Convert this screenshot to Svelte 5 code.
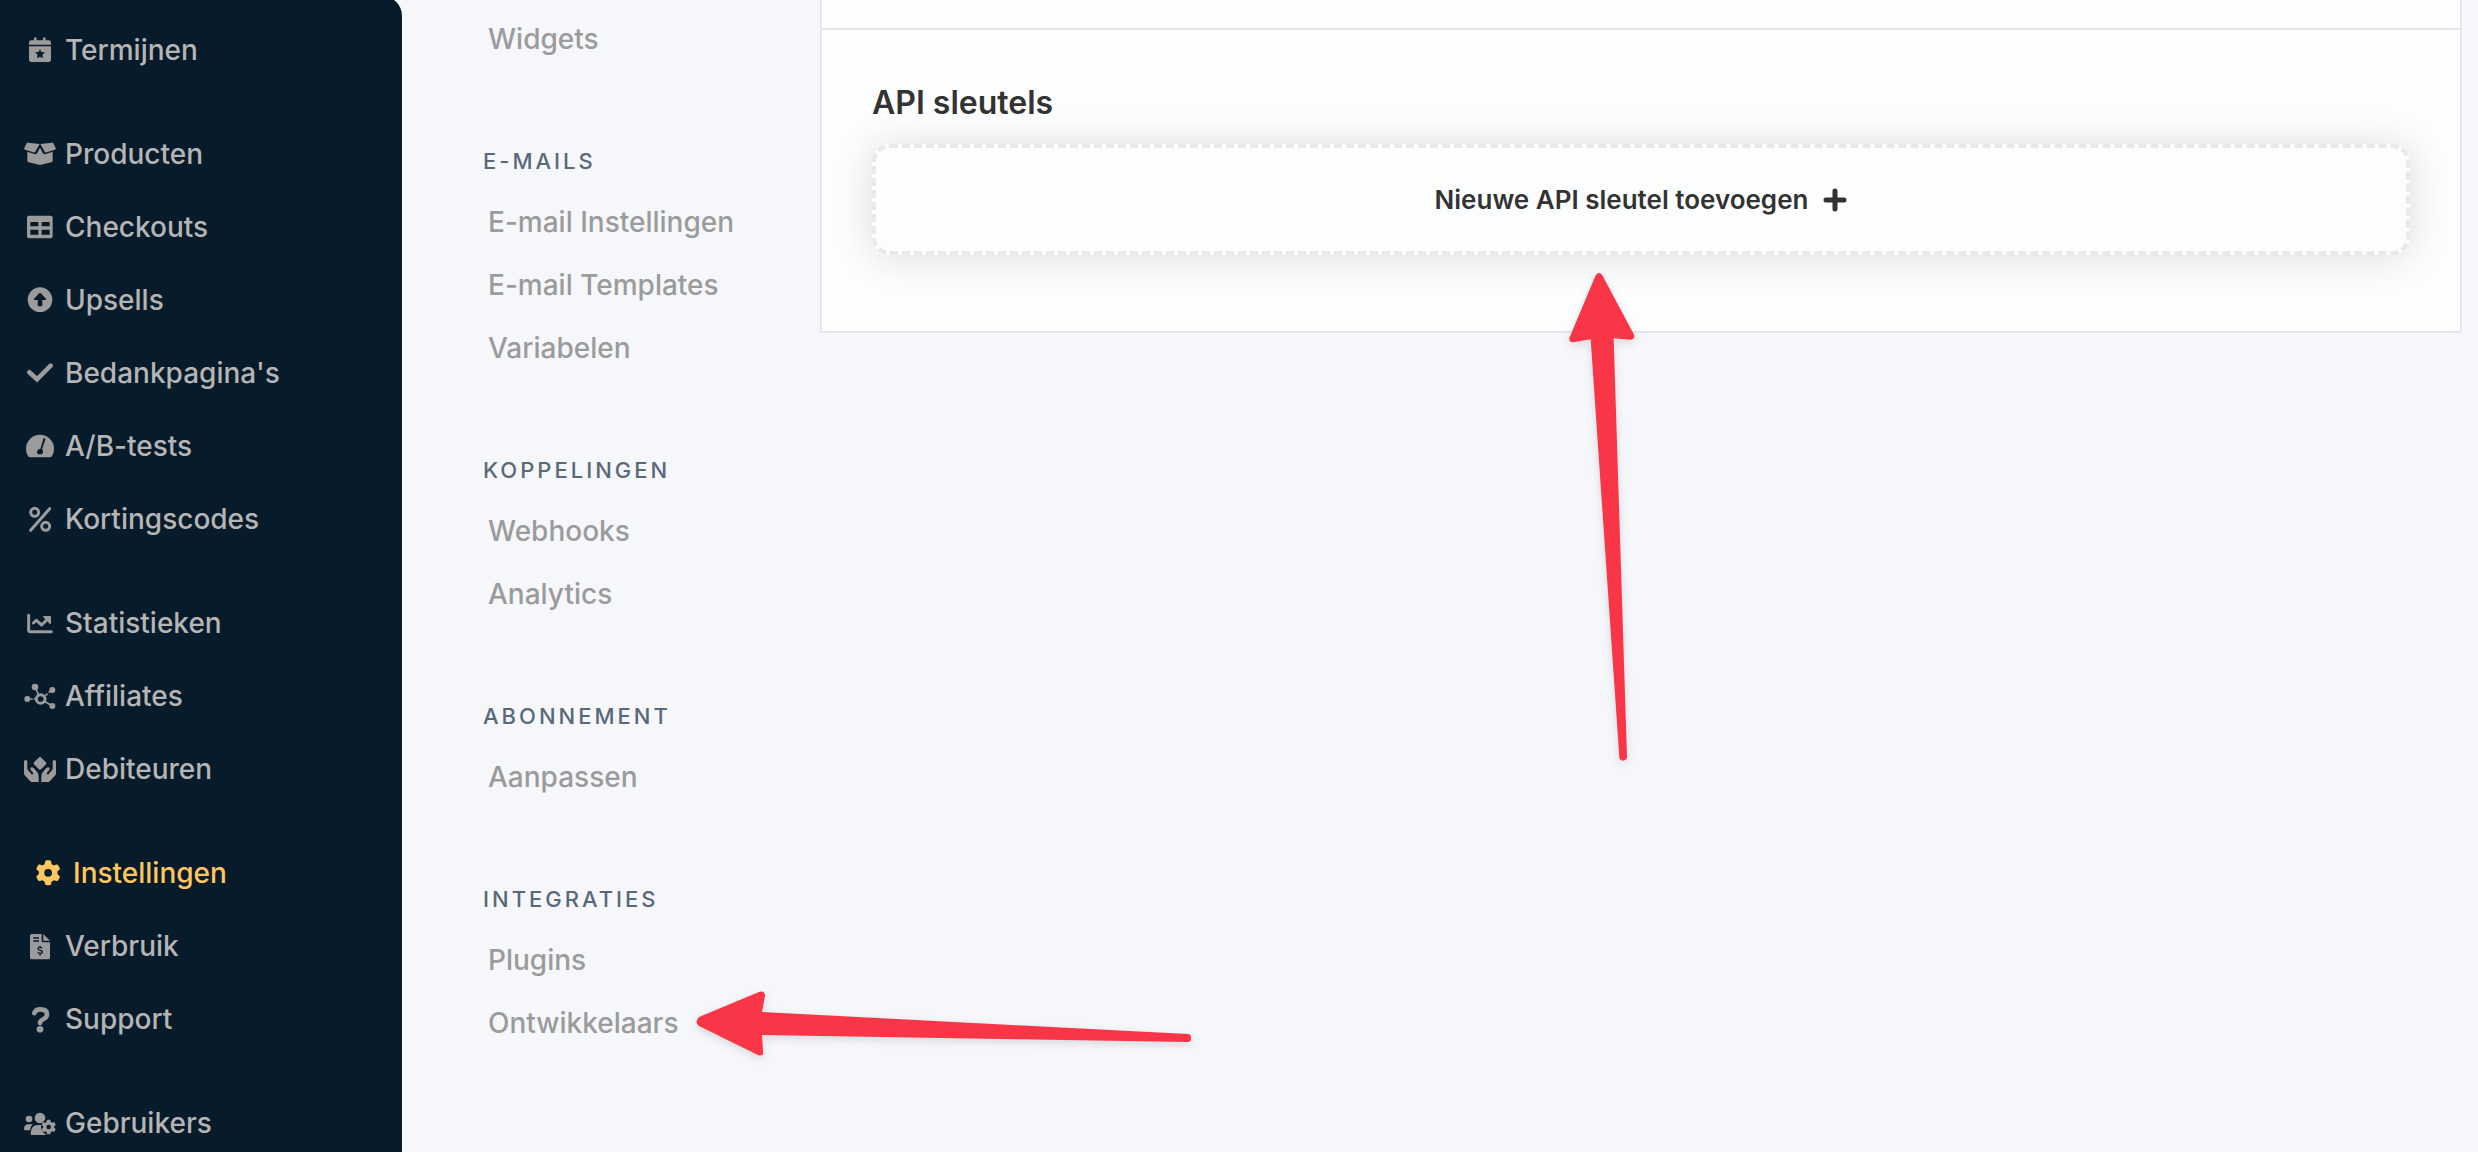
<script lang="ts">
  type MenuItem = { label: string; icon: string; active?: boolean };

  const gear =
    'M495.9 166.6c3.2 8.7 .5 18.4-6.4 24.6l-43.3 39.4c1.1 8.3 1.7 16.8 1.7 25.4s-.6 17.1-1.7 25.4l43.3 39.4c6.9 6.2 9.6 15.9 6.4 24.6c-4.4 11.9-9.7 23.3-15.8 34.3l-4.7 8.1c-6.6 11-14 21.4-22.1 31.2c-5.9 7.2-15.7 9.6-24.5 6.8l-55.7-17.7c-13.4 10.3-28.2 18.9-44 25.4l-12.5 57.1c-2 9.1-9 16.3-18.2 17.8c-13.8 2.3-28 3.5-42.5 3.5s-28.7-1.2-42.5-3.5c-9.2-1.5-16.2-8.7-18.2-17.8l-12.5-57.1c-15.8-6.5-30.6-15.1-44-25.4L83.1 425.9c-8.8 2.8-18.6 .3-24.5-6.8c-8.1-9.8-15.5-20.2-22.1-31.2l-4.7-8.1c-6.1-11-11.4-22.4-15.8-34.3c-3.2-8.7-.5-18.4 6.4-24.6l43.3-39.4C64.6 273.1 64 264.6 64 256s.6-17.1 1.7-25.4L22.4 191.2c-6.9-6.2-9.6-15.9-6.4-24.6c4.4-11.9 9.7-23.3 15.8-34.3l4.7-8.1c6.6-11 14-21.4 22.1-31.2c5.9-7.2 15.7-9.6 24.5-6.8l55.7 17.7c13.4-10.3 28.2-18.9 44-25.4l12.5-57.1c2-9.1 9-16.3 18.2-17.8C227.3 1.2 241.5 0 256 0s28.7 1.2 42.5 3.5c9.2 1.5 16.2 8.7 18.2 17.8l12.5 57.1c15.8 6.5 30.6 15.1 44 25.4l55.7-17.7c8.8-2.8 18.6-.3 24.5 6.8c8.1 9.8 15.5 20.2 22.1 31.2l4.7 8.1c6.1 11 11.4 22.4 15.8 34.3zM256 336a80 80 0 1 0 0-160 80 80 0 1 0 0 160z';

  const menuGroups: MenuItem[][] = [
    [{ label: 'Termijnen', icon: 'calendar' }],
    [
      { label: 'Producten', icon: 'box' },
      { label: 'Checkouts', icon: 'table' },
      { label: 'Upsells', icon: 'up' },
      { label: "Bedankpagina's", icon: 'check' },
      { label: 'A/B-tests', icon: 'gauge' },
      { label: 'Kortingscodes', icon: 'percent' }
    ],
    [
      { label: 'Statistieken', icon: 'chart' },
      { label: 'Affiliates', icon: 'nodes' },
      { label: 'Debiteuren', icon: 'hands' }
    ],
    [
      { label: 'Instellingen', icon: 'gear', active: true },
      { label: 'Verbruik', icon: 'invoice' },
      { label: 'Support', icon: 'question' }
    ],
    [{ label: 'Gebruikers', icon: 'users' }]
  ];

  const settings = [
    { title: '', items: ['Widgets'] },
    { title: 'E-mails', items: ['E-mail Instellingen', 'E-mail Templates', 'Variabelen'] },
    { title: 'Koppelingen', items: ['Webhooks', 'Analytics'] },
    { title: 'Abonnement', items: ['Aanpassen'] },
    { title: 'Integraties', items: ['Plugins', 'Ontwikkelaars'] }
  ];
</script>

{#snippet icon(name: string)}
  <svg class="icon" viewBox="0 0 96 78" aria-hidden="true">
    {#if name === 'calendar'}
      <path d="M15 23v-6q0-7 7-7h8V4q0-3 4-3t4 3v6h19V4q0-3 4-3t4 3v6h9q7 0 7 7v6z" />
      <path fill-rule="evenodd" d="M15 28h66v40q0 7-7 7H22q-7 0-7-7zM48 36l-4 9-11 1 8 7-2 11 9-5 9 5-2-11 8-7-11-1z" />
    {:else if name === 'box'}
      <path d="M8 7q1-3 4-2l35 4-13 23q-2 4-6 2L3 26q-4-2-2-5z" />
      <path d="M88 7q-1-3-4-2L49 9l13 23q2 4 6 2l25-8q4-2 2-5z" />
      <path d="M10 32l21 7q6 2 9-4l8-15 8 15q3 6 9 4l21-7v27q0 4-4 5l-34 8-34-8q-4-1-4-5z" />
    {:else if name === 'table'}
      <path fill-rule="evenodd" d="M15 5h65q6 0 6 6v56q0 6-6 6H15q-6 0-6-6V11q0-6 6-6zM19 24v13h24V24zM53 24v13h24V24zM19 47v15h24V47zM53 47v15h24V47z" />
    {:else if name === 'up'}
      <path fill-rule="evenodd" d="M48 1a37 37 0 1 0 0 74 37 37 0 1 0 0-74zM44 20q4-4 8 0l14 15q2 4-2 4h-9v15q0 4-4 4h-6q-4 0-4-4V39h-9q-4 0-2-4z" />
    {:else if name === 'check'}
      <path class="line thick" d="M16 37l23 21 41-41" />
    {:else if name === 'gauge'}
      <path fill-rule="evenodd" d="M48 5a42 42 0 0 1 42 43q0 12-6 21-2 4-7 4H19q-5 0-7-4-6-9-6-21A42 42 0 0 1 48 5zM58 18l-9 30q-10 1-10 9 0 4 3 7h12q4-4 3-9 0-3-3-6l10-29q0-5-3-5t-3 3z" />
    {:else if name === 'percent'}
      <circle class="line" cx="32" cy="19" r="12" />
      <circle class="line" cx="65" cy="61" r="12" />
      <path class="line" d="M77 8L20 73" />
    {:else if name === 'chart'}
      <path class="line" d="M14 16v45q0 4 4 4h64" />
      <path class="line" d="M28 39l9-8 16 14 18-18" />
      <path d="M59 18h19q3 0 3 3v19q-1 3-4 1L59 23q-3-4 0-5z" />
    {:else if name === 'nodes'}
      <path class="line thin" d="M33 12l12 26M60 54l25 15M19 48h7m3 0h8M64 38l7-6m3-3l7-6" />
      <circle cx="10" cy="48" r="9" />
      <circle cx="33" cy="12" r="10" />
      <circle cx="85" cy="21" r="9" />
      <circle cx="85" cy="69" r="9" />
      <circle class="line" cx="50" cy="48" r="13" />
    {:else if name === 'hands'}
      <path d="M44 5q4-4 8 0l13 13q4 4 0 8L52 39q-4 4-8 0L31 26q-4-4 0-8z" />
      <path d="M0 17q0-5 5-5t5 5v23l14 16q5-2 2-7l-6-7q-3-5 2-8 4-1 7 2l11 13q4 5 4 12v17H24q-4 0-6-3L2 58q-2-3-2-7z" />
      <path d="M96 17q0-5-5-5t-5 5v23L72 56q-5-2-2-7l6-7q3-5-2-8-4-1-7 2L56 49q-4 5-4 12v17h20q4 0 6-3l16-17q2-3 2-7z" />
    {:else if name === 'gear'}
      <path transform="translate(11 1) scale(.146)" d={gear} />
    {:else if name === 'invoice'}
      <path fill-rule="evenodd" d="M23 3h30v20q0 5 5 5h20v46q0 5-5 5H23q-5 0-5-5V8q0-5 5-5zM28 13v4h17v-4zM28 22v4h17v-4z" />
      <path d="M58 3l20 20H58z" />
      <path class="cut" d="M55 45q-13-5-13 2 0 4 7 5 7 2 6 6-1 6-14 1M48 38v5M48 61v7" />
    {:else if name === 'question'}
      <path class="line thick" d="M31 21q4-11 18-11 20 0 20 15 0 9-10 14-11 5-11 12" />
      <circle cx="48" cy="70" r="10" />
    {:else if name === 'users'}
      <circle cx="15" cy="27" r="10" />
      <circle cx="48" cy="24" r="16" />
      <path d="M0 58q0-15 14-15h12q-7 7-8 18H4q-4 0-4-3z" />
      <path d="M20 72q0-27 22-27h14l10 30H24q-4 0-4-3z" />
      <circle class="gap" cx="74" cy="51" r="23" />
      <path transform="translate(52 29) scale(.086)" d={gear} />
    {/if}
  </svg>
{/snippet}

<div class="page">
  <nav class="sidebar" aria-label="Hoofdmenu">
    {#each menuGroups as group}
      <ul>
        {#each group as item}
          <li>
            <a href="#{item.icon}" class:active={item.active}>
              {@render icon(item.icon)}
              <span>{item.label}</span>
            </a>
          </li>
        {/each}
      </ul>
    {/each}
  </nav>

  <nav class="settings" aria-label="Instellingen">
    {#each settings as section}
      <section>
        {#if section.title}
          <h2>{section.title}</h2>
        {/if}
        <ul>
          {#each section.items as item}
            <li>
              <a href="#{item}">{item}</a>
              {#if item === 'Ontwikkelaars'}
                <svg class="arrow arrow-left" viewBox="0 0 510 80" aria-hidden="true">
                  <path d="M9 32Q4 37 9 41L68 70Q74 72 73 66L72 50 498 57Q501 57 501 53 501 49 498 49L72 27 75 11Q75 5 69 7Z" />
                </svg>
              {/if}
            </li>
          {/each}
        </ul>
      </section>
    {/each}
  </nav>

  <main>
    <div class="card">
      <div class="card-top"></div>
      <section class="keys">
        <h1>API sleutels</h1>
        <div class="add-wrap">
          <button type="button" class="add">
            Nieuwe API sleutel toevoegen
            <svg class="plus" viewBox="0 0 24 24" aria-hidden="true">
              <path d="M12 3v18M3 12h18" />
            </svg>
          </button>
          <svg class="arrow arrow-up" viewBox="0 0 360 1560" aria-hidden="true">
            <path d="M167 46Q176 32 187 46L281 222Q287 238 271 239L221 235 261 1492Q260 1502 249 1502 239 1502 238 1492L152 238 100 247Q84 246 89 232Z" />
          </svg>
        </div>
      </section>
    </div>
  </main>
</div>

<style>
  :global(body) {
    margin: 0;
    overflow: hidden;
    background: #f5f7fb;
  }

  .page {
    display: grid;
    grid-template-columns: 402px 418px 1fr;
    height: 100vh;
    overflow: hidden;
    font-family: Inter, 'Liberation Sans', sans-serif;
    font-size: 28px;
    font-weight: 500;
  }

  ul {
    list-style: none;
    margin: 0;
    padding: 0;
  }

  a {
    color: inherit;
    text-decoration: none;
  }

  /* Hoofdmenu */
  .sidebar {
    display: flex;
    flex-direction: column;
    gap: 31px;
    margin-top: -4px;
    padding: 17px 24px 0;
    border-radius: 0 20px 0 0;
    background: #081b2a;
    color: #b5b5b5;
  }

  .sidebar a {
    display: flex;
    align-items: center;
    gap: 9px;
    height: 73px;
  }

  .sidebar a.active {
    padding-left: 8px;
    color: #ffc760;
  }

  .icon {
    flex: none;
    width: 32px;
    height: 26px;
    overflow: visible;
    fill: #9b9b9b;
    stroke: none;
  }

  .active .icon {
    fill: #ffc760;
  }

  .line {
    fill: none;
    stroke: #9b9b9b;
    stroke-width: 9;
    stroke-linecap: round;
    stroke-linejoin: round;
  }

  .thick {
    stroke-width: 14;
    stroke-linejoin: miter;
  }

  .thin {
    stroke-width: 5;
    stroke-linecap: butt;
  }

  .cut {
    fill: none;
    stroke: #081b2a;
    stroke-width: 4;
  }

  .gap {
    fill: #081b2a;
  }

  /* Instellingen */
  .settings {
    display: flex;
    flex-direction: column;
    gap: 60px;
    padding: 8px 0 0 81px;
    color: #9b9b9b;
  }

  .settings h2 {
    margin: 0;
    color: #5a6978;
    font-size: 22px;
    font-weight: 500;
    line-height: 60px;
    letter-spacing: 3px;
    text-transform: uppercase;
  }

  .settings li {
    position: relative;
    padding-left: 5px;
    line-height: 63px;
  }

  /* Kaart */
  main {
    padding-right: 16px;
  }

  .card {
    border: 2px solid #e5e7ea;
    border-top: 0;
    background: #fcfdfe;
  }

  .card-top {
    height: 28px;
    border-bottom: 2px solid #e5e6e8;
  }

  .keys {
    padding: 53px 50px 76px;
  }

  h1 {
    margin: 0 0 21px;
    color: #333;
    font-size: 32px;
    font-weight: 600;
    line-height: 40px;
  }

  .add-wrap {
    position: relative;
  }

  .add {
    display: flex;
    align-items: center;
    justify-content: center;
    gap: 15px;
    width: 100%;
    height: 111px;
    padding: 0;
    border: 4px dashed #e9e9e9;
    border-radius: 18px;
    background: #fcfdfe;
    box-shadow: 0 2px 40px rgba(0, 0, 0, 0.13);
    color: #333;
    font: inherit;
    font-size: 26px;
    font-weight: 600;
    cursor: pointer;
  }

  .plus {
    width: 24px;
    height: 24px;
    overflow: visible;
    fill: none;
    stroke: #333;
    stroke-width: 5;
    stroke-linecap: round;
  }

  /* Aanwijspijlen */
  .arrow {
    position: absolute;
    z-index: 2;
    fill: #f93648;
    filter: drop-shadow(0 3px 4px rgba(0, 0, 0, 0.12));
    pointer-events: none;
  }

  .arrow-up {
    top: calc(100% + 5px);
    left: calc(50% - 101px);
    width: 120px;
    height: 520px;
  }

  .arrow-left {
    top: -7px;
    left: 207px;
    width: 510px;
    height: 80px;
  }
</style>
